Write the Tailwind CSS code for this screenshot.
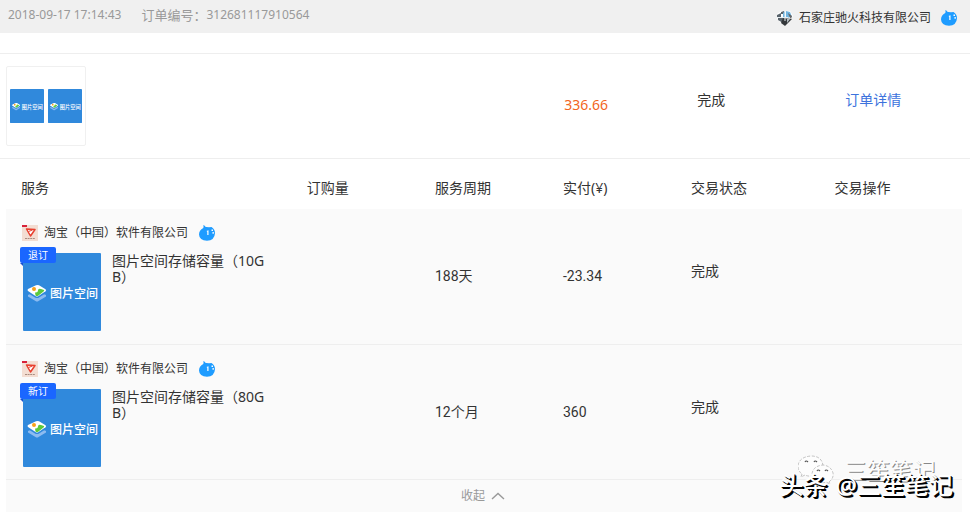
<!DOCTYPE html>
<html lang="zh-CN">
<head>
  <meta charset="UTF-8" />
  <meta name="viewport" content="width=device-width, initial-scale=1.0"/>
  <title>订单列表</title>
  <script src="https://cdn.jsdelivr.net/npm/@tailwindcss/browser@4"></script>
</head>
<body class="min-h-screen bg-white font-['Noto_Sans','Noto_Sans_CJK_SC',sans-serif] text-sm text-[#333]">

<!-- 公用图标 -->
<svg class="hidden" aria-hidden="true">
  <symbol id="tile" viewBox="0 0 78 78">
    <rect width="78" height="78" rx="1" fill="#3089dc"/>
    <path d="M5 42l9-4 9 4v1.500l-7.500 4.500q-1.500 1-3 0L5 43.500z" fill="#8dbbf0"/>
    <path d="M4 39.500l10-5 10 5-8 5q-2 1.200-4 0z" fill="#3089dc"/>
    <path d="M5 38q-1-1 0-2l8-3.800q1.500-.6 3 0l6.500 4q1.300 1 0 2l-7 4.800q-1.500 1-3 0z" fill="#fff"/>
    <path d="M12.500 42.500l-.5-3q3 .5 3-2t3-1.500l3 1q.5.700-.5 1.500l-5 4q-1.500 1-3 0z" fill="#5cc93c"/>
    <circle cx="11" cy="36" r="2" fill="#f7a21b"/>
    <text x="27" y="45" font-size="12" font-weight="500" fill="#fff">图片空间</text>
  </symbol>
  <symbol id="wangwang" viewBox="0 0 16 16">
    <path d="M4.300 0q1.600.4 2.400 2Q8 1.800 10 2.300l2.500-.3q3.500 2.200 3.500 6.300Q15.500 15.600 8 15.800.3 15.500 0 9.500 0 5 4.300 3 4.800 1.500 4.300 0z" fill="#1f9cff"/>
    <path d="M7.500 6l2-.8v4.800H8.300V6.800zM12.500 4.500h1.500v1.500h-1.500zM13.500 7h1.300v1.800h-1.300z" fill="#fff"/>
  </symbol>
  <symbol id="shop" viewBox="0 0 16 16">
    <rect width="16" height="16" fill="#f3ddd2"/>
    <path d="M0 0h5v2H0z" fill="#d8223a"/>
    <path d="M4.500 4l8.500.5L8.500 11z" fill="#fff" stroke="#e8402f" stroke-width="1.500" stroke-linejoin="round"/>
    <path d="M6.500 6.500l4-1.500" stroke="#e8402f"/>
    <path d="M3 13.500h10" stroke="#a98d80" stroke-dasharray="2 .6"/>
  </symbol>
</svg>

<header class="flex h-[33px] items-center justify-between bg-[#f0f0f0] pr-[13px] pl-2">
  <div class="flex items-center gap-5 pb-0.5 text-xs text-[#999]">
    <time>2018-09-17 17:14:43</time>
    <p class="flex items-center"><span class="text-[13px]">订单编号：</span><span>312681117910564</span></p>
  </div>
  <div class="flex items-center pt-0.5 text-xs">
    <svg class="mr-1.5 size-4" viewBox="0 0 16 16" aria-hidden="true">
      <path d="M0 4l4-3h9l3 5-3 4-5 6-5-4-3-4z" fill="#fff"/>
      <path d="M0 5l4-2v4H0zM4 2l3-1v3H4zM1 8h5v5L1 10z" fill="#59636b"/>
      <path d="M6 3l2-2v6H6zM9 1l4 1 2 5-6 1z" fill="#70b5e1"/>
      <path d="M6 8l9 1-3 3-4 4-4-3z" fill="#34383b"/>
      <path d="M11 3l4 3-1 3-2-3z" fill="#666"/>
      <path d="M0 7.500h11M8 1v10" stroke="#e6edf0"/>
      <path d="M10 9h3l-3 4z" fill="#b5bec3"/>
    </svg>
    <span class="mr-2.5">石家庄驰火科技有限公司</span>
    <svg class="size-4" aria-label="旺旺"><use href="#wangwang"/></svg>
  </div>
</header>

<main>
  <section class="mt-5 flex h-[106px] border-y border-[#eee] pr-2 pl-1.5">
    <div class="w-[58.400%]">
      <div class="mt-3 flex size-20 items-center justify-center gap-1 rounded-xs border border-[#f0f0f0]">
        <svg class="size-[34px]"><use href="#tile"/></svg>
        <svg class="size-[34px]"><use href="#tile"/></svg>
      </div>
    </div>
    <p class="w-[13.900%] pt-[41px] text-[#f26522]">336.66</p>
    <p class="w-[15.500%] pt-9">完成</p>
    <p class="pt-9"><a href="#" class="text-[#3d73dd]">订单详情</a></p>
  </section>

  <div class="mr-2 ml-1.5">
    <table class="w-full table-fixed text-left">
      <colgroup>
        <col class="w-[30%]"/>
        <col class="w-[13.400%]"/>
        <col class="w-[13.400%]"/>
        <col class="w-[13.400%]"/>
        <col class="w-[15%]"/>
        <col/>
      </colgroup>
      <thead>
        <tr class="h-[50px]">
          <th class="pt-2 pl-[15px] font-normal">服务</th>
          <th class="pt-2 pl-3.5 font-normal">订购量</th>
          <th class="pt-2 pl-3.5 font-normal">服务周期</th>
          <th class="pt-2 pl-3.5 font-normal">实付(¥)</th>
          <th class="pt-2 pl-3.5 font-normal">交易状态</th>
          <th class="pt-2 pl-3.5 font-normal">交易操作</th>
        </tr>
      </thead>
      <tbody class="bg-[#fafafa]">
        <tr class="h-[135px] border-b border-[#eee]">
          <td class="pt-4 pl-4 align-top">
            <div class="flex h-4 items-center text-xs">
              <svg class="mr-1.5 size-4"><use href="#shop"/></svg>
              <span class="mr-[11px]">淘宝（中国）软件有限公司</span>
              <svg class="size-4" aria-label="旺旺"><use href="#wangwang"/></svg>
            </div>
            <div class="relative mt-3 flex gap-[11px] pl-px">
              <svg class="size-[78px] shrink-0"><use href="#tile"/></svg>
              <span class="absolute -top-1.5 -left-0.5 h-4 w-9 rounded-xs bg-[#1a66ff] text-center text-[10px] leading-4 text-white">退订</span>
              <svg class="absolute top-2.5 -left-0.5 h-[3px] w-[3px]" viewBox="0 0 3 3"><path d="M0 0h3v3z" fill="#1a4fd0"/></svg>
              <p class="w-[156px] leading-4 break-all">图片空间存储容量（10GB）</p>
            </div>
          </td>
          <td></td>
          <td class="pl-3.5 font-[Roboto,'Noto_Sans_CJK_SC',sans-serif]">188天</td>
          <td class="pl-3.5 font-[Roboto,'Noto_Sans_CJK_SC',sans-serif]">-23.34</td>
          <td class="pb-2.5 pl-3.5">完成</td>
          <td></td>
        </tr>
        <tr class="h-[135px] border-b border-[#eee]">
          <td class="pt-4 pl-4 align-top">
            <div class="flex h-4 items-center text-xs">
              <svg class="mr-1.5 size-4"><use href="#shop"/></svg>
              <span class="mr-[11px]">淘宝（中国）软件有限公司</span>
              <svg class="size-4" aria-label="旺旺"><use href="#wangwang"/></svg>
            </div>
            <div class="relative mt-3 flex gap-[11px] pl-px">
              <svg class="size-[78px] shrink-0"><use href="#tile"/></svg>
              <span class="absolute -top-1.5 -left-0.5 h-4 w-9 rounded-xs bg-[#1a66ff] text-center text-[10px] leading-4 text-white">新订</span>
              <svg class="absolute top-2.5 -left-0.5 h-[3px] w-[3px]" viewBox="0 0 3 3"><path d="M0 0h3v3z" fill="#1a4fd0"/></svg>
              <p class="w-[156px] leading-4 break-all">图片空间存储容量（80GB）</p>
            </div>
          </td>
          <td></td>
          <td class="pl-3.5 font-[Roboto,'Noto_Sans_CJK_SC',sans-serif]">12个月</td>
          <td class="pl-3.5 font-[Roboto,'Noto_Sans_CJK_SC',sans-serif]">360</td>
          <td class="pb-2.5 pl-3.5">完成</td>
          <td></td>
        </tr>
      </tbody>
    </table>
    <div class="flex h-8 items-center justify-center bg-[#fafafa] pr-0.5">
      <button type="button" class="flex items-center gap-1.5 text-xs text-[#999]">
        收起
        <svg class="h-2 w-3.5" viewBox="0 0 14 8" fill="none" stroke="#999" stroke-width="1.400"><path d="M1 7l6-5.500L13 7"/></svg>
      </button>
    </div>
  </div>
</main>

<!-- 水印：浅色在下，深色在上 -->
<div class="pointer-events-none absolute right-[34px] bottom-[26px] flex items-center gap-2.5 text-[23px] leading-9 whitespace-nowrap text-[#fdfdfd] [text-shadow:1px_1px_0_#888]">
  <svg class="h-[30px] w-9" viewBox="0 0 36 30" fill="#fdfdfd" stroke="#aaa" stroke-width=".7" stroke-dasharray="3 1.500">
    <path d="M4 19l-1 3 4-2q3 1.500 7 1Q25 20 25 11 24 1 13 1 1 2 0 11q0 5 4 8z"/>
    <path d="M31 27q5-4 4-9-2-7-10-8-10 1-11 9 1 8 10 9 2 0 4-1l4 2z"/>
    <path d="M7 7q1-2 3 0M16 7q1-2 3 0M19 16q1-2 3 0M27 16q1-2 3 0" fill="none" stroke="#555" stroke-dasharray="none" stroke-width="1.200"/>
  </svg>
  三笙笔记
</div>
<div class="pointer-events-none absolute right-[17px] bottom-[11px] flex gap-2 text-2xl leading-9 font-medium whitespace-nowrap text-white [text-shadow:1px_1px_0_#000,2px_2px_0_#000]">
  <span>头条</span>
  <span>@三笙笔记</span>
</div>
</body>
</html>
